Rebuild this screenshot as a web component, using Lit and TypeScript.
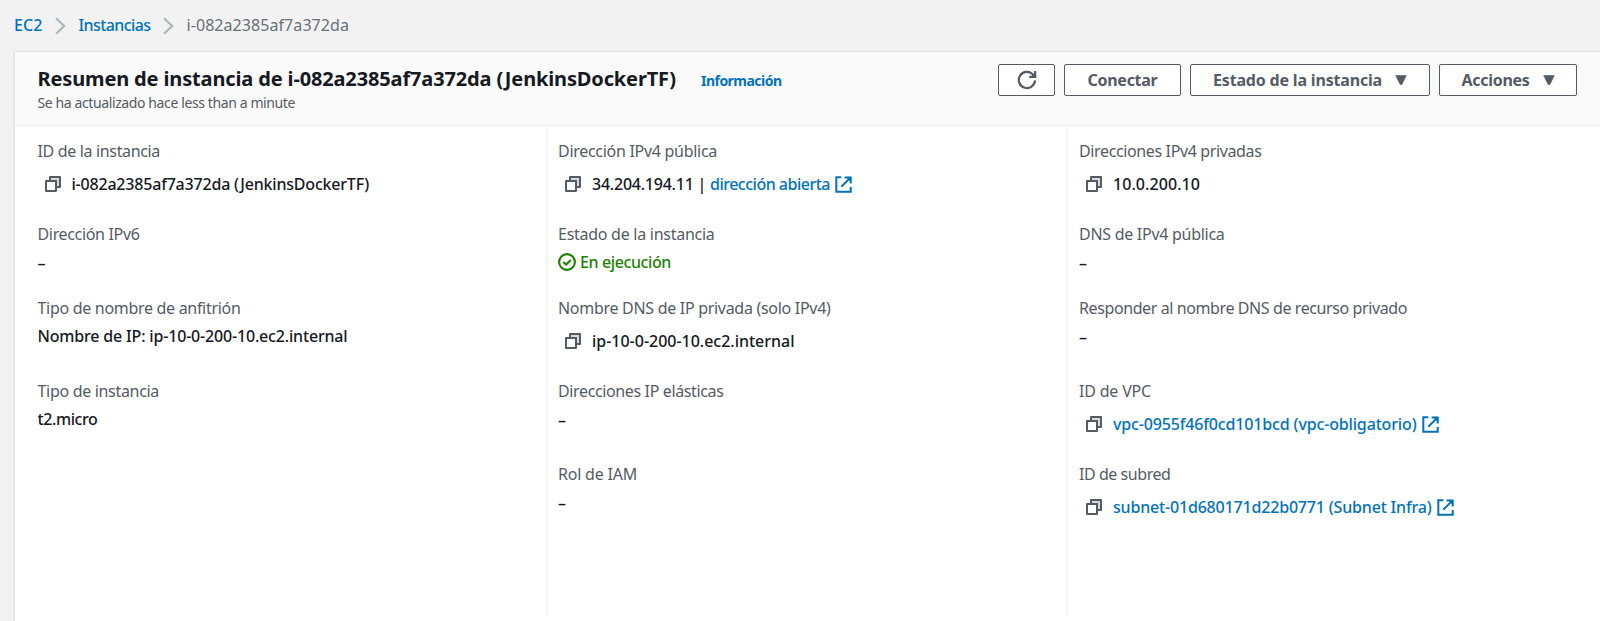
import { LitElement, html, css, svg, nothing } from "lit";
import { customElement, property } from "lit/decorators.js";

/** A single line of text, tracked so that it occupies the given width. */
@customElement("tracked-text")
class TrackedText extends LitElement {
  @property() text = "";
  @property({ type: Number }) width = 0;

  static styles = css`
    :host { display: inline-block; white-space: pre; }
    .run { display: inline-block; font-kerning: normal; }
  `;

  updated() {
    const run = this.renderRoot.querySelector(".run") as HTMLElement;
    run.style.letterSpacing = "0px";
    const natural = run.getBoundingClientRect().width;
    run.style.letterSpacing = `${(this.width - natural) / this.text.length}px`;
  }

  render() {
    return html`<span class="run">${this.text}</span>`;
  }
}

const t = (text: string, width: number) =>
  html`<tracked-text .text=${text} .width=${width}></tracked-text>`;

const icons = {
  chevron: svg`<svg width="11" height="18" viewBox="0 0 11 18" fill="none" stroke="#aab7b8" stroke-width="2.2"><path d="M1 1.2 9.2 9 1 16.8"/></svg>`,
  copy: svg`<svg width="16" height="16" viewBox="0 0 16 16" fill="none" stroke="#545b64" stroke-width="2" stroke-linejoin="round"><path d="M5 5V1h10v10h-4V5z" fill="#d5dbdb"/><path d="M1 5h10v10H1z" fill="#fff"/></svg>`,
  external: svg`<svg width="17" height="17" viewBox="0 0 17 17" fill="none" stroke="#0073bb" stroke-width="2"><path d="M6.3 1.3H1.3v14.4h14.4v-4.8"/><path d="M9.6 1.4h6.1v6M15.4 1.6 6.3 10.7"/><path d="M11.8 1.4h3.9v3.9z" fill="#0073bb" stroke-width="1"/></svg>`,
  check: svg`<svg width="18" height="18" viewBox="0 0 18 18" fill="none" stroke="#1d8102" stroke-width="2.1"><circle cx="9" cy="9" r="7.9"/><path d="m5.3 8.9 2.8 2.6 4.7-4.6"/></svg>`,
  refresh: svg`<svg width="20" height="20" viewBox="0 0 20 20" fill="none" stroke="#545b64" stroke-width="2.2"><path d="M18 10.4A8.1 8.1 0 1 1 15.4 4l2 2"/><path d="M18.2 1v5.8h-6"/><path d="M18.2 3v3.8h-4z" fill="#545b64" stroke-width="1"/></svg>`,
  caret: svg`<svg width="12" height="10" viewBox="0 0 12 10"><path d="M.7.5h10.6L6.9 9.4H5.1z" fill="#545b64" stroke="#545b64" stroke-width=".6" stroke-linejoin="round"/></svg>`,
};

interface Field {
  label: [string, number];
  value?: [string, number];
  link?: [string, number];
  copy?: boolean;
  status?: boolean;
}

const columns: Field[][] = [
  [
    { label: ["ID de la instancia", 122.5], value: ["i-082a2385af7a372da (JenkinsDockerTF)", 297.5], copy: true },
    { label: ["Dirección IPv6", 102] },
    { label: ["Tipo de nombre de anfitrión", 203], value: ["Nombre de IP: ip-10-0-200-10.ec2.internal", 310] },
    { label: ["Tipo de instancia", 121.5], value: ["t2.micro", 60] },
  ],
  [
    { label: ["Dirección IPv4 pública", 159], value: ["34.204.194.11 | ", 118], link: ["dirección abierta", 120], copy: true },
    { label: ["Estado de la instancia", 156.5], value: ["En ejecución", 91], status: true },
    { label: ["Nombre DNS de IP privada (solo IPv4)", 272.5], value: ["ip-10-0-200-10.ec2.internal", 202.5], copy: true },
    { label: ["Direcciones IP elásticas", 165.5] },
    { label: ["Rol de IAM", 79] },
  ],
  [
    { label: ["Direcciones IPv4 privadas", 182.5], value: ["10.0.200.10", 87], copy: true },
    { label: ["DNS de IPv4 pública", 145.5] },
    { label: ["Responder al nombre DNS de recurso privado", 328] },
    { label: ["ID de VPC", 72], link: ["vpc-0955f46f0cd101bcd (vpc-obligatorio)", 303.5], copy: true },
    { label: ["ID de subred", 91.5], link: ["subnet-01d680171d22b0771 (Subnet Infra)", 318.5], copy: true },
  ],
];

@customElement("app-root")
class AppRoot extends LitElement {
  static styles = css`
    :host {
      display: flex; flex-direction: column; height: 621px; overflow: hidden;
      background: #f2f2f2; color: #16191f;
      font: 400 16px/22px "Noto Sans", "Open Sans", sans-serif;
    }
    * { box-sizing: border-box; }
    svg { display: block; flex: none; }
    .crumbs { display: flex; align-items: center; height: 52px; padding: 0 0 2px 14px; font-weight: 450; color: #687078; }
    .crumbs svg { margin: 2px 13px 0 12px; }
    .link { color: #0073bb; text-decoration: none; font-weight: 500; }
    .panel {
      flex: 1; display: flex; flex-direction: column; margin-left: 15px;
      background: #fff; box-shadow: 0 0 1px 1px #e6e8e8, -1px 1px 1px rgba(0, 28, 36, .2);
    }
    .head {
      display: flex; justify-content: space-between; align-items: flex-start; height: 74px; flex: none;
      padding: 12px 23px 0 22.5px; background: #fafafa; border-bottom: 1px solid #eff0f0;
    }
    .titles { display: flex; flex-direction: column; padding-top: 1px; }
    .title-line { display: flex; align-items: baseline; gap: 25px; height: 28px; }
    h2 { margin: 0; font-size: 20px; line-height: 28px; font-weight: 700; }
    .info { font-size: 14px; font-weight: 700; padding-top: 0; }
    .updated { font-size: 14px; line-height: 20px; font-weight: 450; color: #545b64; }
    .actions { display: flex; gap: 9px; }
    .btn {
      display: flex; align-items: center; justify-content: center; height: 32px; width: 117px; padding: 0 0 1px;
      background: #fff; border: 1px solid #545b64; border-radius: 2px;
      font: inherit; font-weight: 700; color: #545b64; gap: 13px;
    }
    .btn.icon { width: 57px; }
    .btn.state { width: 240px; }
    .btn.menu { width: 138px; }
    .body { display: grid; grid-template-columns: 531px 520px 1fr; padding-top: 2px; height: 490px; }
    .col { display: grid; grid-template-rows: 83px 74px 83px 83px 1fr; padding: 12px 0 0 11px; border-left: 2px solid #f4f5f5; }
    .col:first-child { padding-left: 22.5px; border-left: 0; }
    .col:nth-child(2) { padding-left: 10px; }
    .label { color: #545b64; height: 22px; font-weight: 450; }
    .value { display: flex; align-items: center; height: 22px; margin-top: 6px; font-weight: 500; }
    .value.copyable { height: 32px; padding-left: 7px; }
    .copyable > svg:first-child { margin-right: 11px; }
    .value .link { display: flex; align-items: center; gap: 5px; }
    .value.status { color: #1d8102; gap: 4px; }
    .value.empty { padding-top: 2px; }
  `;

  private field(f: Field) {
    const empty = !f.value && !f.link;
    const kind = f.copy ? "copyable" : f.status ? "status" : empty ? "empty" : "";
    return html`<div>
      <div class="label">${t(...f.label)}</div>
      <div class="value ${kind}">
        ${f.copy ? icons.copy : f.status ? icons.check : nothing}
        ${f.value ? t(...f.value) : nothing}
        ${f.link ? html`<a class="link">${t(...f.link)}${icons.external}</a>` : nothing}
        ${empty ? "–" : nothing}
      </div>
    </div>`;
  }

  render() {
    return html`
      <nav class="crumbs">
        <a class="link">${t("EC2", 28.5)}</a>${icons.chevron}
        <a class="link">${t("Instancias", 72)}</a>${icons.chevron}
        ${t("i-082a2385af7a372da", 162.5)}
      </nav>
      <section class="panel">
        <header class="head">
          <div class="titles">
            <div class="title-line">
              <h2>${t("Resumen de instancia de i-082a2385af7a372da (JenkinsDockerTF)", 638.5)}</h2>
              <a class="link info">${t("Información", 80.5)}</a>
            </div>
            <div class="updated">${t("Se ha actualizado hace less than a minute", 257.5)}</div>
          </div>
          <div class="actions">
            <button class="btn icon">${icons.refresh}</button>
            <button class="btn">${t("Conectar", 70)}</button>
            <button class="btn state">${t("Estado de la instancia", 169)}${icons.caret}</button>
            <button class="btn menu">${t("Acciones", 68)}${icons.caret}</button>
          </div>
        </header>
        <div class="body">
          ${columns.map((c) => html`<div class="col">${c.map((f) => this.field(f))}</div>`)}
        </div>
      </section>
    `;
  }
}
